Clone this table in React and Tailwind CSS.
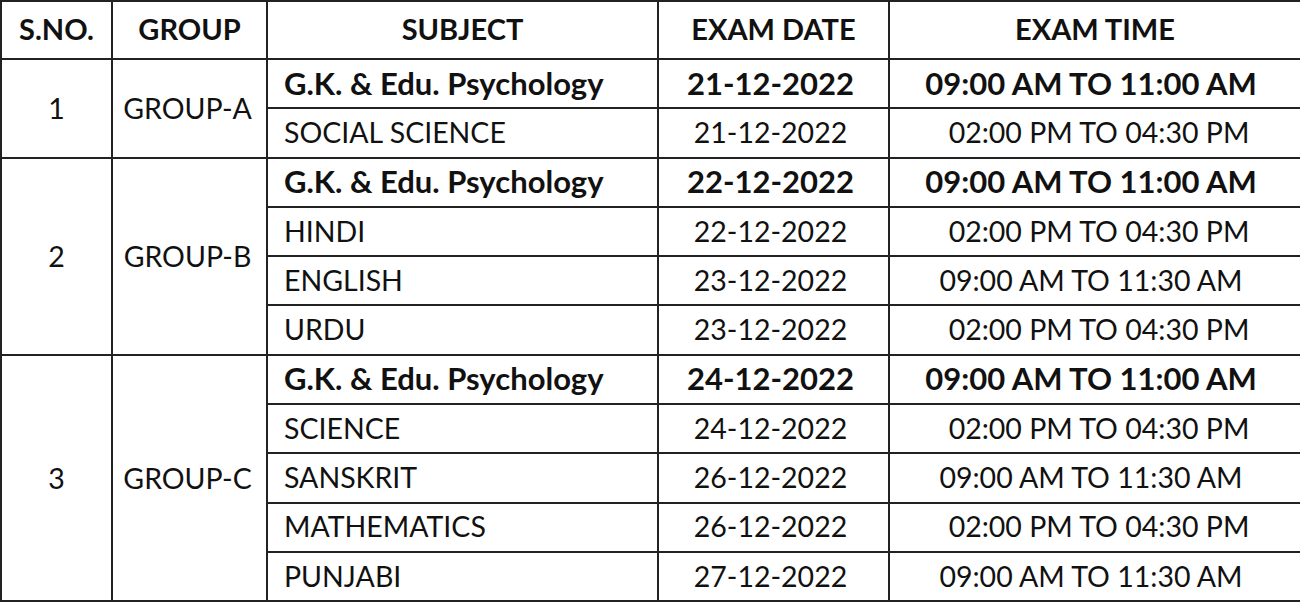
const groups = [
  {
    sno: "1",
    name: "GROUP-A",
    rows: [
      { subject: "G.K. & Edu. Psychology", date: "21-12-2022", time: "09:00 AM TO 11:00 AM", bold: true },
      { subject: "SOCIAL SCIENCE", date: "21-12-2022", time: "02:00 PM TO 04:30 PM", shift: true },
    ],
  },
  {
    sno: "2",
    name: "GROUP-B",
    rows: [
      { subject: "G.K. & Edu. Psychology", date: "22-12-2022", time: "09:00 AM TO 11:00 AM", bold: true },
      { subject: "HINDI", date: "22-12-2022", time: "02:00 PM TO 04:30 PM", shift: true },
      { subject: "ENGLISH", date: "23-12-2022", time: "09:00 AM TO 11:30 AM" },
      { subject: "URDU", date: "23-12-2022", time: "02:00 PM TO 04:30 PM", shift: true },
    ],
  },
  {
    sno: "3",
    name: "GROUP-C",
    rows: [
      { subject: "G.K. & Edu. Psychology", date: "24-12-2022", time: "09:00 AM TO 11:00 AM", bold: true },
      { subject: "SCIENCE", date: "24-12-2022", time: "02:00 PM TO 04:30 PM", shift: true },
      { subject: "SANSKRIT", date: "26-12-2022", time: "09:00 AM TO 11:30 AM" },
      { subject: "MATHEMATICS", date: "26-12-2022", time: "02:00 PM TO 04:30 PM", shift: true },
      { subject: "PUNJABI", date: "27-12-2022", time: "09:00 AM TO 11:30 AM" },
    ],
  },
];

const cell = "border-2 border-[#222] p-0 leading-[34px]";

export default function App() {
  return (
    <div className="w-[1300px] h-[602px] bg-white overflow-hidden font-['Lato','Carlito',sans-serif] text-[#111]">
      <table className="w-[1300px] table-fixed border-collapse">
        <colgroup>
          <col className="w-[111px]" />
          <col className="w-[155px]" />
          <col className="w-[391px]" />
          <col className="w-[231px]" />
          <col className="w-[412px]" />
        </colgroup>
        <thead>
          <tr className="h-[58px] text-[29px] font-bold">
            <th className={`${cell} pb-[3px]`}>S.NO.</th>
            <th className={`${cell} pb-[3px]`}>GROUP</th>
            <th className={`${cell} pb-[3px]`}>SUBJECT</th>
            <th className={`${cell} pb-[3px]`}>EXAM DATE</th>
            <th className={`${cell} pb-[3px]`}>EXAM TIME</th>
          </tr>
        </thead>
        <tbody className="text-[28.5px]">
          {groups.map((g) =>
            g.rows.map((r, i) => (
              <tr key={g.sno + i} className={`h-[49.3px] ${r.bold ? "font-bold text-[31px]" : ""}`}>
                {i === 0 && (
                  <>
                    <td rowSpan={g.rows.length} className={`${cell} text-center align-middle font-normal text-[28.5px]`}>
                      {g.sno}
                    </td>
                    <td rowSpan={g.rows.length} className={`${cell} text-center align-middle font-normal text-[28.5px] pr-[4px]`}>
                      {g.name}
                    </td>
                  </>
                )}
                <td className={`${cell} pl-[16px] pb-[2px]`}>{r.subject}</td>
                <td className={`${cell} text-center pr-[6px] pb-[2px]`}>{r.date}</td>
                <td className={`${cell} text-center pb-[2px] ${r.shift ? "pl-[8px]" : "pr-[8px]"}`}>
                  {r.time}
                </td>
              </tr>
            ))
          )}
        </tbody>
      </table>
    </div>
  );
}
